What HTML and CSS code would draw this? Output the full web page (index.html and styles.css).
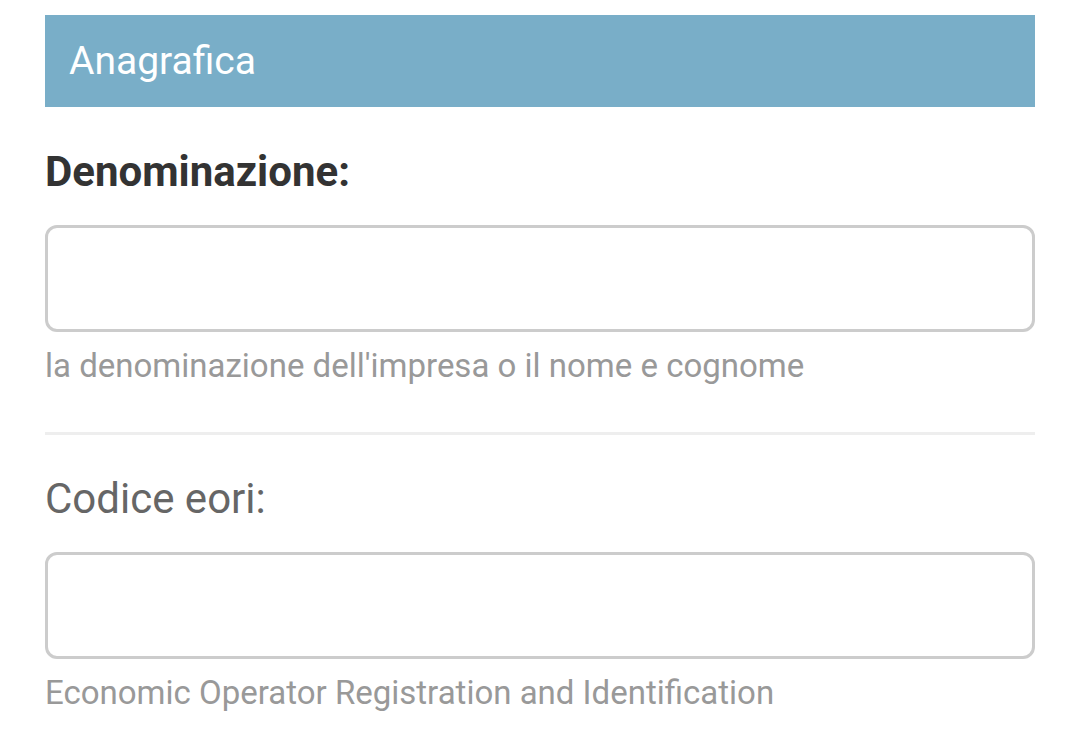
FILE: index.html
```html
<!DOCTYPE html>
<html lang="it">

<head>
    <meta charset="UTF-8">
    <meta name="viewport" content="width=device-width, initial-scale=1.0">
    <title>Anagrafica</title>
    <link rel="stylesheet" href="styles.css">
</head>

<body>
    <fieldset class="module">
        <h2>Anagrafica</h2>

        <div class="form-row">
            <label class="required" for="id_denominazione">Denominazione:</label>
            <input type="text" id="id_denominazione" class="text-input">
            <div class="help">la denominazione dell'impresa o il nome e cognome</div>
        </div>

        <div class="form-row">
            <label for="id_codice_eori">Codice eori:</label>
            <input type="text" id="id_codice_eori" class="text-input">
            <div class="help">Economic Operator Registration and Identification</div>
        </div>
    </fieldset>
</body>

</html>
```

FILE: styles.css
```css
body {
    margin: 0;
    padding: 15px 45px 0 45px;
    background-color: #fff;
    font-family: Roboto, 'Liberation Sans', sans-serif;
    color: #333;
}

.module {
    margin: 0;
    padding: 0;
    border: none;
    min-width: 0;
}

.module h2 {
    margin: 0;
    height: 92px;
    padding: 0 24px;
    display: flex;
    align-items: center;
    background-color: #79aec8;
    color: #fff;
    font-size: 39px;
    font-weight: 400;
}

.form-row {
    display: flex;
    flex-direction: column;
    padding: 40px 0 46px 0;
    border-bottom: 3px solid #eee;
}

.form-row + .form-row {
    padding-top: 39px;
}

.form-row:last-child {
    border-bottom: none;
}

.form-row label {
    display: block;
    font-size: 42px;
    line-height: 49px;
    color: #666;
    margin-bottom: 29px;
}

.form-row label.required {
    font-weight: 700;
    color: #333;
}

.text-input {
    box-sizing: border-box;
    width: 100%;
    height: 107px;
    margin: 0;
    border: 3px solid #ccc;
    border-radius: 12px;
    background-color: #fff;
    font-family: inherit;
    font-size: 39px;
    padding: 0 15px;
}

.help {
    margin-top: 14px;
    font-size: 33px;
    line-height: 40px;
    color: #999;
}
```
